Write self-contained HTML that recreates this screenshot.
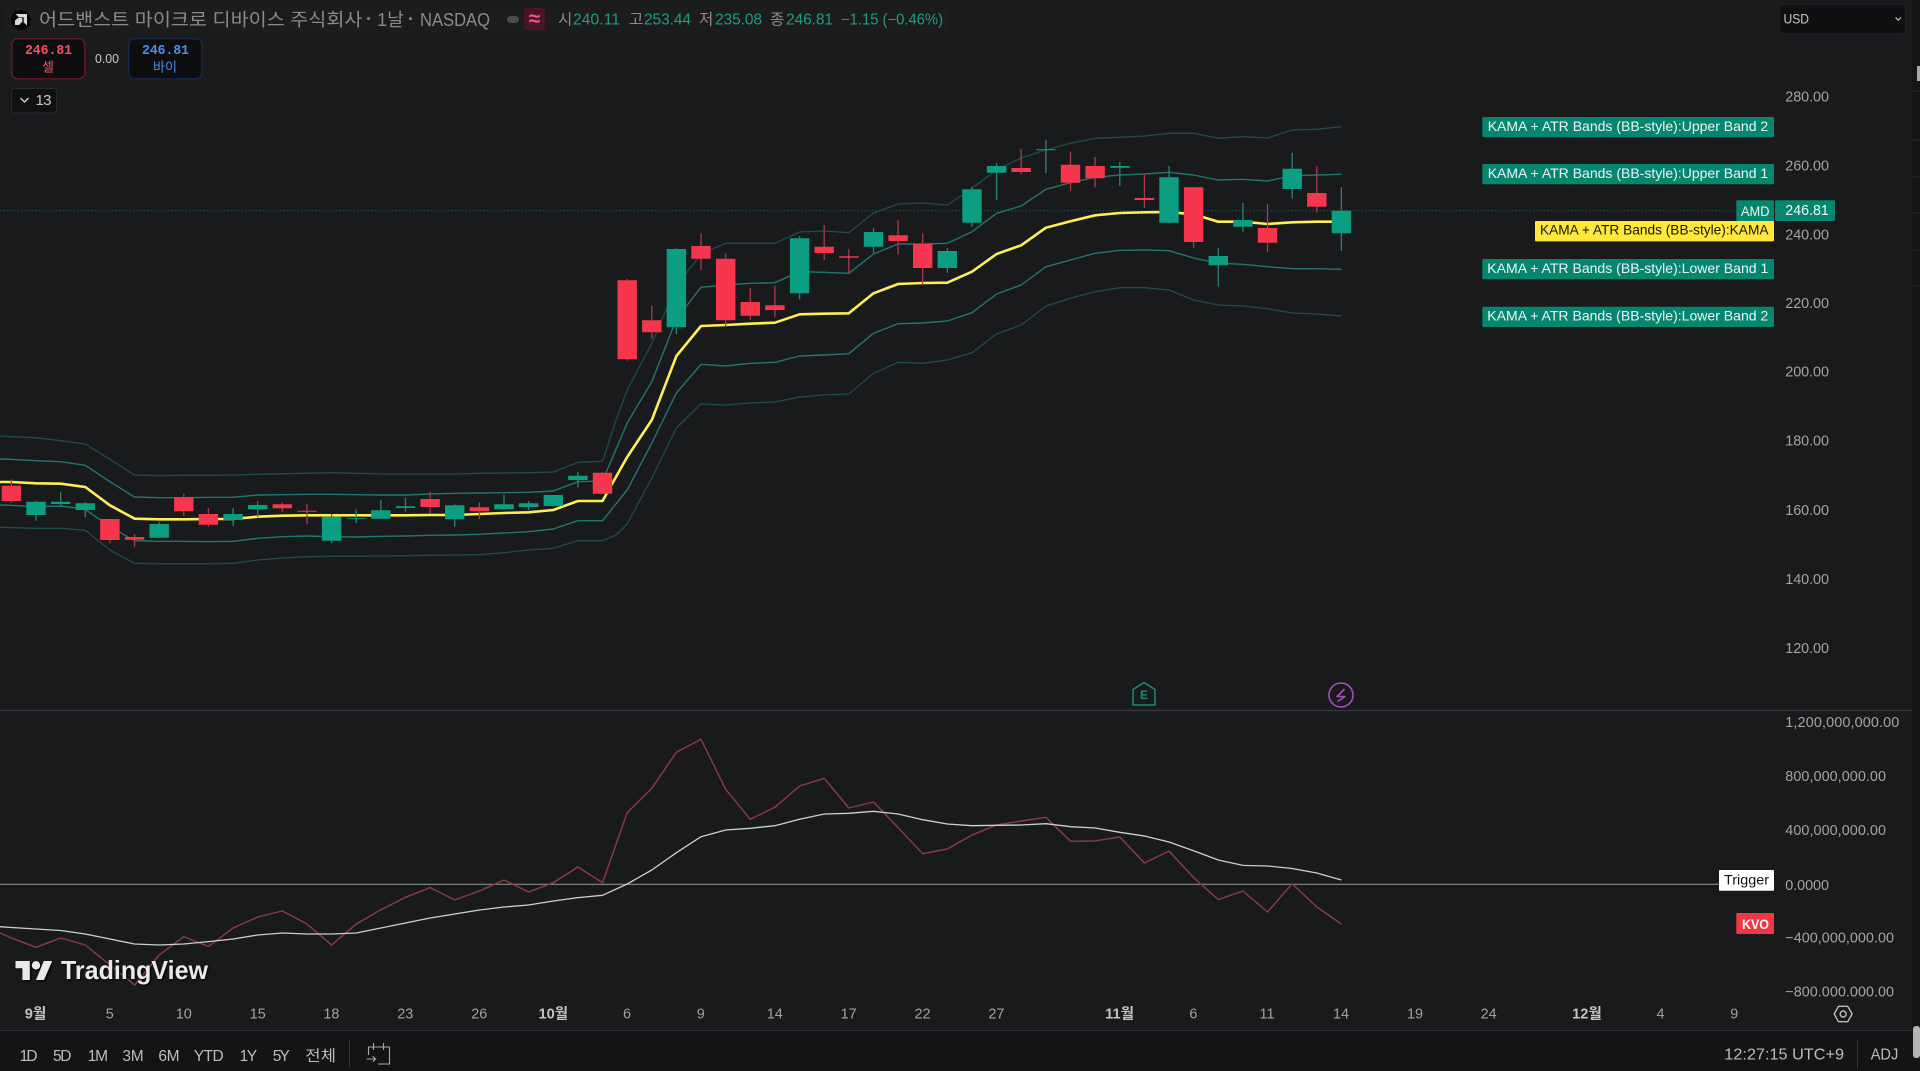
<!DOCTYPE html>
<html lang="ko"><head><meta charset="utf-8"><title>AMD</title>
<style>
html,body{margin:0;padding:0;background:#191a1c;width:1920px;height:1071px;overflow:hidden}
svg{display:block;position:absolute;left:0;top:0}
text{font-family:"Liberation Sans","Noto Sans CJK KR",sans-serif;dominant-baseline:central}
.ax{fill:#a3a3a3;font-size:14.4px;transform:translateY(1px)}
.t{fill:#a3a3a3;font-size:14.4px;text-anchor:middle;transform:translateY(.7px)}
.m{fill:#c4c4c4;font-size:14.6px;font-weight:bold;text-anchor:middle;transform:translateY(.7px)}
.b{fill:#bdbdbd;font-size:15.5px;transform:translateY(1px)}
.lb{fill:#ecf5f3;font-size:14px;transform:translateY(-.5px)}
.n{fill:#1d9d84;font-size:15.5px}
.k{fill:#8b8b88;font-size:15.5px}
</style></head><body>
<svg width="1920" height="1071" viewBox="0 0 1920 1071">
<rect width="1920" height="1071" fill="#191a1c"/>
<!-- legend backgrounds -->
<rect x="4" y="6" width="945" height="28" fill="#1d1c1d"/>
<rect x="6" y="36" width="200" height="47" fill="#1c1b1c"/>
<!-- right strip -->
<rect x="1912" y="0" width="8" height="1071" fill="#141517"/>
<path d="M1912 91h8M1912 140h8M1912 177h8M1912 213h8M1912 250h8M1912 286h8" stroke="#26282b" stroke-width="1"/>
<rect x="1917" y="66" width="3" height="15" fill="#a8a8a8"/>
<!-- price dotted line -->
<line x1="0" y1="210.7" x2="1736" y2="210.7" stroke="#1f5a52" stroke-width="1" stroke-dasharray="1.5 2"/>
<!-- separators -->
<line x1="0" y1="710.5" x2="1912" y2="710.5" stroke="#36383b" stroke-width="1.2"/>
<line x1="0" y1="884.3" x2="1719" y2="884.3" stroke="#8a8a8a" stroke-width="1.1"/>
<!-- bands -->
<g fill="none" stroke-linejoin="round">
<polyline stroke="#1f4d49" stroke-width="1.3" points="0,436 11.4,436.7 36,437.7 60.7,440.7 85.3,444 109.9,459.3 134.6,475 159.2,475.7 183.8,475.3 208.4,475.3 233.1,475 257.7,474.3 282.3,473.7 307,473.3 331.6,472.7 356.2,473.3 380.9,474 405.5,474 430.1,474 454.7,474 479.4,473.3 504,473 528.6,472.7 553.3,472 577.9,462.3 602.5,461.3 616,420 627.2,390 651.8,343.3 676.4,286 701,254 725.7,243.3 750.3,243.3 774.9,243.3 799.6,232 824.2,231 848.8,232.7 873.5,213 898.1,204 922.7,203 947.3,205 972,188.3 996.6,170 1021.2,158 1045.9,150 1070.5,143.3 1095.1,138.3 1119.8,137.3 1144.4,136 1169,133.3 1193.6,133.3 1218.3,138.3 1242.9,136.7 1267.5,138 1292.2,130 1316.8,129.3 1341.4,126.7"/>
<polyline stroke="#1f4d49" stroke-width="1.3" points="0,527.3 11.4,527.7 36,528.3 60.7,528.3 85.3,530.3 109.9,550 134.6,563.3 159.2,563.7 183.8,563.7 208.4,563.7 233.1,563.3 257.7,560 282.3,558 307,556.7 331.6,556.3 356.2,556.3 380.9,556 405.5,555.7 430.1,555.3 454.7,555 479.4,554.7 504,552.7 528.6,550 553.3,548.3 577.9,540.7 602.5,540.7 616,535 627.2,524 651.8,478 676.4,428 701,404 725.7,405 750.3,403 774.9,402 799.6,397 824.2,395 848.8,394 873.5,373.3 898.1,362.3 922.7,363.3 947.3,360 972,352.7 996.6,334 1021.2,325 1045.9,306 1070.5,298.3 1095.1,291.7 1119.8,287.7 1144.4,287.7 1169,290 1193.6,300 1218.3,305 1242.9,306 1267.5,308.7 1292.2,313 1316.8,314 1341.4,316"/>
<polyline stroke="#22756f" stroke-width="1.4" points="0,459 11.4,459.3 36,460.7 60.7,461.7 85.3,465.3 109.9,481.7 134.6,497 159.2,497.7 183.8,497.7 208.4,497.3 233.1,497.3 257.7,495 282.3,494.7 307,494.3 331.6,494.3 356.2,494.7 380.9,495 405.5,495 430.1,494 454.7,493.3 479.4,493 504,492.7 528.6,492.3 553.3,491 577.9,481.7 602.5,481 627.2,423 651.8,381.7 676.4,319 701,287.3 725.7,285 750.3,283.3 774.9,282.7 799.6,271.7 824.2,272.3 848.8,273.3 873.5,254 898.1,244 922.7,244 947.3,243.3 972,231.7 996.6,213.3 1021.2,206 1045.9,189.3 1070.5,182.7 1095.1,177.3 1119.8,175 1144.4,174 1169,172.3 1193.6,175 1218.3,180 1242.9,179.3 1267.5,181 1292.2,175.7 1316.8,175 1341.4,174.3"/>
<polyline stroke="#22756f" stroke-width="1.4" points="0,505 11.4,505.3 36,506.7 60.7,506 85.3,509.3 109.9,526.7 134.6,540.7 159.2,541.3 183.8,541.3 208.4,541.7 233.1,541.3 257.7,538.3 282.3,536.7 307,536 331.6,536.7 356.2,537 380.9,536.3 405.5,536 430.1,535.3 454.7,535 479.4,534.3 504,533 528.6,531.7 553.3,529 577.9,520.7 602.5,520.7 627.2,490 651.8,443 676.4,393 701,364.3 725.7,366 750.3,363.3 774.9,362.3 799.6,356 824.2,355 848.8,353.7 873.5,333.3 898.1,323.7 922.7,323 947.3,321 972,312.7 996.6,294 1021.2,285 1045.9,266.7 1070.5,260 1095.1,253.3 1119.8,250.3 1144.4,250 1169,250.7 1193.6,258 1218.3,263.3 1242.9,264.3 1267.5,266.7 1292.2,268.7 1316.8,268.7 1341.4,269.3"/>
<polyline stroke="#ffee58" stroke-width="2.6" points="0,482 11.4,482 36,483.3 60.7,483.7 85.3,487 109.9,505.3 134.6,518.7 159.2,519.3 183.8,519.3 208.4,519 233.1,519 257.7,516.7 282.3,515.7 307,515.3 331.6,515.3 356.2,515.3 380.9,515.3 405.5,515.3 430.1,515 454.7,515 479.4,514 504,513 528.6,512.3 553.3,510 577.9,501 602.5,501 627.2,457 651.8,420 676.4,356 701,326 725.7,325 750.3,323.7 774.9,322.7 799.6,314.3 824.2,313.7 848.8,313.3 873.5,293.3 898.1,284 922.7,283 947.3,282.7 972,271.7 996.6,254 1021.2,245.3 1045.9,227.7 1070.5,221.3 1095.1,215.3 1119.8,213 1144.4,212.3 1169,212 1193.6,214.3 1218.3,221.7 1242.9,221.7 1267.5,224 1292.2,222.3 1316.8,221.7 1341.4,221.7"/>
</g>
<!-- wicks -->
<path stroke="#a83c4a" stroke-width="1.3" fill="none" d="M11.4 479.3V502.7M109.9 518.7V543.3M134.6 534V546.7M183.8 494V516M208.4 508.3V526.7M282.3 502.3V512M307 504V524M430.1 491.3V514M479.4 502.3V519.3M602.5 472.3V494M627.2 279V360.7M651.8 306V338.7M701 233.3V270M725.7 253.3V326M750.3 288.3V320M774.9 285.7V317.3M824.2 225V260M848.8 249.3V274M898.1 220V254M922.7 233.3V285M1021.2 148.7V174.3M1070.5 152V190.7M1095.1 157V187.3M1144.4 174V208M1193.6 186.7V248.3M1267.5 204V252M1316.8 166V212.7"/>
<path stroke="#2a8476" stroke-width="1.3" fill="none" d="M36 500.7V520.7M60.7 492.3V506.7M85.3 501.7V517.3M159.2 521.7V538M233.1 508V526M257.7 501V517.3M331.6 514V543.3M356.2 509.3V523.3M380.9 500V519M405.5 497.7V511.7M454.7 504.3V526.7M504 494.7V510M528.6 501.3V510M553.3 495V506.7M577.9 471.7V487.7M676.4 248.3V334M799.6 236V299.3M873.5 228V253.3M947.3 248.3V272.7M972 186.7V226.7M996.6 163.3V200M1045.9 140V173.3M1119.8 161.7V186M1169 166V223.3M1218.3 248V286.7M1242.9 202.7V231.7M1292.2 152.7V198.7M1341.4 187.3V250.7"/>
<!-- bodies -->
<path fill="#f5364d" d="M1.7 485.7H21.1V501H1.7zM100.2 519H119.6V540H100.2zM124.9 537H144.3V539.7H124.9zM174.1 497H193.5V511.3H174.1zM198.7 514H218.1V524.7H198.7zM272.6 504.3H292V508.3H272.6zM297.3 510.7H316.7V511.7H297.3zM420.4 499H439.8V507H420.4zM469.7 507.3H489.1V511.3H469.7zM592.8 472.7H612.2V493.7H592.8zM617.5 280.3H636.9V359.3H617.5zM642.1 320.3H661.5V332.3H642.1zM691.3 246H710.7V258.7H691.3zM716 258.7H735.4V320.3H716zM740.6 302H760V315.7H740.6zM765.2 305.3H784.6V310H765.2zM814.5 246.7H833.9V253H814.5zM839.1 256.3H858.5V257.7H839.1zM888.4 235.3H907.8V241H888.4zM913 244H932.4V268H913zM1011.5 168H1030.9V172H1011.5zM1060.8 164.7H1080.2V182.7H1060.8zM1085.4 166H1104.8V178.3H1085.4zM1134.7 198H1154.1V200H1134.7zM1183.9 187.3H1203.3V242H1183.9zM1257.8 228H1277.2V242.7H1257.8zM1307.1 193H1326.5V206.7H1307.1z"/>
<path fill="#0b9e83" d="M26.3 501.7H45.7V515H26.3zM51 501.7H70.4V504H51zM75.6 503.3H95V510H75.6zM149.5 524H168.9V537.7H149.5zM223.4 514H242.8V520H223.4zM248 505H267.4V509.3H248zM321.9 516.7H341.3V540.7H321.9zM346.5 518H365.9V518.7H346.5zM371.2 510.3H390.6V518.7H371.2zM395.8 506.3H415.2V508H395.8zM445 505.3H464.4V519.3H445zM494.3 504.3H513.7V509.3H494.3zM518.9 503.3H538.3V507H518.9zM543.6 495H563V506H543.6zM568.2 475.7H587.6V480H568.2zM666.7 249H686.1V327.3H666.7zM789.9 238.3H809.3V293.3H789.9zM863.8 232H883.2V246.7H863.8zM937.6 251H957V268H937.6zM962.3 189.3H981.7V222.7H962.3zM986.9 166H1006.3V172.7H986.9zM1036.2 149.3H1055.6V150.3H1036.2zM1110.1 166H1129.5V167.7H1110.1zM1159.3 177.3H1178.7V222.7H1159.3zM1208.6 256H1228V265.3H1208.6zM1233.2 220H1252.6V226.7H1233.2zM1282.5 168.7H1301.9V189H1282.5zM1331.7 210.7H1351.1V233.3H1331.7z"/>
<!-- KVO / trigger -->
<g fill="none" stroke-linejoin="round">
<polyline stroke="#8f3a44" stroke-width="1.4" points="0,933 11.4,938 36,947.3 60.7,938 85.3,945 109.9,965 134.6,985 159.2,955 183.8,936.6 208.4,946.5 233.1,928 257.7,917 282.3,911 307,924 331.6,945 356.2,924 380.9,909.7 405.5,897.3 430.1,887.6 454.7,900 479.4,891 504,880 528.6,892 553.3,882.6 577.9,867 602.5,882.7 627.2,812.7 651.8,788.3 676.4,752.3 701,739.3 725.7,789.3 750.3,819.3 774.9,807.3 799.6,786 824.2,778.3 848.8,808 873.5,802 898.1,827.7 922.7,853.7 947.3,849 972,835 996.6,825 1021.2,821 1045.9,817.3 1070.5,841.3 1095.1,840.9 1119.8,837 1144.4,863 1169,851 1193.6,877.6 1218.3,899.6 1242.9,891 1267.5,912 1292.2,883.7 1316.8,907 1341.4,924"/>
<polyline stroke="#cfcfcf" stroke-width="1.3" points="0,926.7 11.4,927.5 36,929 60.7,930.5 85.3,934 109.9,939 134.6,944 159.2,945 183.8,944 208.4,941.6 233.1,939 257.7,935 282.3,933 307,934 331.6,934 356.2,933 380.9,928 405.5,923 430.1,918 454.7,914 479.4,910 504,907 528.6,905 553.3,901 577.9,897.6 602.5,895.3 627.2,884 651.8,870 676.4,852.7 701,836.7 725.7,830 750.3,828.3 774.9,825.7 799.6,819.3 824.2,814 848.8,813.3 873.5,811.3 898.1,814 922.7,819.7 947.3,824 972,825.7 996.6,825.3 1021.2,825 1045.9,823.7 1070.5,826.7 1095.1,828 1119.8,832.3 1144.4,836 1169,842 1193.6,850.7 1218.3,860 1242.9,865.4 1267.5,866 1292.2,868.5 1316.8,873 1341.4,880"/>
</g>
<!-- legend -->
<circle cx="21" cy="20" r="10" fill="#060606"/>
<path fill="#d8d8d8" d="M15.5 14H27V25.5L23.7 22.2V17.3H18.8zM15 20.5L18.3 17.7H22.3V21.7L19 25H15z"/>
<text x="39" y="20" font-size="18" fill="#8a8a87" textLength="323.5" lengthAdjust="spacingAndGlyphs">어드밴스트 마이크로 디바이스 주식회사</text>
<text x="366" y="19" font-size="18" font-weight="bold" fill="#8a8a87">·</text>
<text x="377" y="20" font-size="18" fill="#8a8a87" textLength="27" lengthAdjust="spacingAndGlyphs">1날</text>
<text x="408" y="19" font-size="18" font-weight="bold" fill="#8a8a87">·</text>
<text x="420" y="20" font-size="18" fill="#8a8a87" textLength="70" lengthAdjust="spacingAndGlyphs">NASDAQ</text>
<rect x="507" y="16" width="12" height="7" rx="3.5" fill="#4c4c47"/>
<rect x="524" y="8" width="21" height="22" rx="3" fill="#4b1526"/>
<text x="534.5" y="19" font-size="21" font-weight="bold" fill="#f0588a" text-anchor="middle">≈</text>
<text class="k" x="558" y="20" textLength="14">시</text><text class="n" x="573" y="20" textLength="47">240.11</text>
<text class="k" x="629" y="20" textLength="14">고</text><text class="n" x="644" y="20" textLength="47">253.44</text>
<text class="k" x="699" y="20" textLength="15">저</text><text class="n" x="715" y="20" textLength="47">235.08</text>
<text class="k" x="770" y="20" textLength="15">종</text><text class="n" x="786" y="20" textLength="47">246.81</text>
<text class="n" x="841" y="20" textLength="102" lengthAdjust="spacingAndGlyphs">−1.15 (−0.46%)</text>
<!-- buy/sell -->
<rect x="11.8" y="38.8" width="73" height="40" rx="6" fill="#0e0e10" stroke="#6e1c2a" stroke-width="1.2"/>
<rect x="128.8" y="38.8" width="73" height="40" rx="6" fill="#0e0e10" stroke="#16295a" stroke-width="1.2"/>
<text x="25" y="51" font-size="14" font-weight="bold" fill="#f7525f" style="font-family:'Liberation Mono',monospace" textLength="47" lengthAdjust="spacingAndGlyphs">246.81</text>
<text x="48" y="67" font-size="13" fill="#f7525f" text-anchor="middle">셀</text>
<text x="142" y="51" font-size="14" font-weight="bold" fill="#4a90e8" style="font-family:'Liberation Mono',monospace" textLength="47" lengthAdjust="spacingAndGlyphs">246.81</text>
<text x="165" y="67" font-size="13" fill="#4a90e8" text-anchor="middle">바이</text>
<text x="95" y="58.5" font-size="13" fill="#c8c8c8" textLength="24" lengthAdjust="spacingAndGlyphs">0.00</text>
<rect x="11.5" y="88.5" width="45" height="24.5" rx="3" fill="#101113" stroke="#28292c"/>
<path d="M20.5 98l4 4 4-4" fill="none" stroke="#cfcfcf" stroke-width="1.4"/>
<text x="35.5" y="100.5" font-size="15" fill="#c8c8c8" textLength="16">13</text>
<!-- USD -->
<rect x="1779.5" y="4.5" width="126" height="29.5" rx="4" fill="#0f1012" stroke="#1f2023"/>
<text x="1783.5" y="19" font-size="13.5" fill="#c4c4c4" textLength="25.5" lengthAdjust="spacingAndGlyphs">USD</text>
<path d="M1895.5 17.5l2.7 2.7 2.7-2.7" fill="none" stroke="#c4c4c4" stroke-width="1.2"/>
<!-- price axis -->
<text class="ax" x="1785.3" y="96.7" textLength="43.7">280.00</text>
<text class="ax" x="1785.3" y="165.3" textLength="43.7">260.00</text>
<text class="ax" x="1785.3" y="234.3" textLength="43.7">240.00</text>
<text class="ax" x="1785.3" y="303" textLength="43.7">220.00</text>
<text class="ax" x="1785.3" y="371.5" textLength="43.7">200.00</text>
<text class="ax" x="1785.3" y="440.7" textLength="43.7">180.00</text>
<text class="ax" x="1785.3" y="509.8" textLength="43.7">160.00</text>
<text class="ax" x="1785.3" y="578.8" textLength="43.7">140.00</text>
<text class="ax" x="1785.3" y="647.8" textLength="43.7">120.00</text>
<!-- labels -->
<g>
<rect x="1482.3" y="117" width="291.7" height="20.3" rx="1" fill="#07866f"/>
<rect x="1482.3" y="164" width="291.7" height="20.3" rx="1" fill="#07866f"/>
<rect x="1482.3" y="259" width="291.7" height="20.3" rx="1" fill="#07866f"/>
<rect x="1482.3" y="306.7" width="291.7" height="20.3" rx="1" fill="#07866f"/>
<text class="lb" x="1487.7" y="126.5" textLength="280.5" lengthAdjust="spacingAndGlyphs">KAMA + ATR Bands (BB-style):Upper Band 2</text>
<text class="lb" x="1487.7" y="173.5" textLength="280.5" lengthAdjust="spacingAndGlyphs">KAMA + ATR Bands (BB-style):Upper Band 1</text>
<text class="lb" x="1487.3" y="268.5" textLength="281" lengthAdjust="spacingAndGlyphs">KAMA + ATR Bands (BB-style):Lower Band 1</text>
<text class="lb" x="1487.3" y="316" textLength="281" lengthAdjust="spacingAndGlyphs">KAMA + ATR Bands (BB-style):Lower Band 2</text>
<rect x="1736.3" y="200.3" width="37.7" height="20.7" rx="1" fill="#07866f"/>
<rect x="1775" y="200.3" width="60" height="20.7" rx="1.5" fill="#07866f"/>
<text class="lb" x="1741" y="211.5" textLength="28.5" lengthAdjust="spacingAndGlyphs">AMD</text>
<text x="1785.3" y="211" font-size="14.4" fill="#f2f7f6" textLength="43.5" lengthAdjust="spacingAndGlyphs">246.81</text>
<rect x="1535" y="221" width="239" height="20.4" rx="1" fill="#ffe83b"/>
<text x="1540" y="229.7" font-size="14" fill="#161616" textLength="228.5" lengthAdjust="spacingAndGlyphs">KAMA + ATR Bands (BB-style):KAMA</text>
</g>
<!-- event icons -->
<path d="M1133 689.5L1144 682.5L1155 689.5V705H1133Z" fill="#191a1c" stroke="#1a8c75" stroke-width="1.5" stroke-linejoin="round"/>
<text x="1144" y="695" font-size="12" font-weight="bold" fill="#1a8c75" text-anchor="middle">E</text>
<circle cx="1341" cy="695" r="12" fill="#191a1c" stroke="#a64bc4" stroke-width="1.6"/>
<path d="M1344.5 689L1337 696.5H1345L1337.5 701.5" fill="none" stroke="#a64bc4" stroke-width="1.6" stroke-linejoin="round"/>
<!-- oscillator axis -->
<text class="ax" x="1785.3" y="722" textLength="114">1,200,000,000.00</text>
<text class="ax" x="1785.3" y="776" textLength="100.7">800,000,000.00</text>
<text class="ax" x="1785.3" y="830" textLength="100.7">400,000,000.00</text>
<text class="ax" x="1785.3" y="885" textLength="43.7">0.0000</text>
<text class="ax" x="1785.3" y="937.7" textLength="108.7">−400,000,000.00</text>
<text class="ax" x="1785.3" y="991.7" textLength="108.7">−800.000.000.00</text>
<rect x="1719" y="870" width="55" height="20.7" rx="1" fill="#fff"/>
<text x="1724" y="879.7" font-size="14" fill="#111" textLength="45" lengthAdjust="spacingAndGlyphs">Trigger</text>
<rect x="1736.3" y="913" width="37.7" height="21" rx="1" fill="#f23645"/>
<text x="1742" y="924" font-size="14" fill="#fff" font-weight="bold" textLength="27" lengthAdjust="spacingAndGlyphs">KVO</text>
<!-- TradingView logo -->
<g fill="#eaeaea" style="filter:drop-shadow(1px 1.5px 1px #000)">
<path d="M29.8 980H22.4V968.3H15.5V961H29.8ZM44 980H36L43.8 961H52.2Z"/>
<circle cx="36" cy="965.3" r="4.2"/>
<text x="61" y="970" font-size="26" font-weight="bold" fill="#eaeaea" textLength="147" lengthAdjust="spacingAndGlyphs">TradingView</text>
</g>
<!-- time axis -->
<text class="m" x="35.5" y="1014">9월</text>
<text class="t" x="109.7" y="1014">5</text>
<text class="t" x="183.8" y="1014">10</text>
<text class="t" x="257.7" y="1014">15</text>
<text class="t" x="331.4" y="1014">18</text>
<text class="t" x="405.2" y="1014">23</text>
<text class="t" x="479.2" y="1014">26</text>
<text class="m" x="553.3" y="1014">10월</text>
<text class="t" x="627" y="1014">6</text>
<text class="t" x="700.8" y="1014">9</text>
<text class="t" x="774.7" y="1014">14</text>
<text class="t" x="848.6" y="1014">17</text>
<text class="t" x="922.5" y="1014">22</text>
<text class="t" x="996.4" y="1014">27</text>
<text class="m" x="1119.6" y="1014">11월</text>
<text class="t" x="1193.4" y="1014">6</text>
<text class="t" x="1267" y="1014">11</text>
<text class="t" x="1341" y="1014">14</text>
<text class="t" x="1415" y="1014">19</text>
<text class="t" x="1488.6" y="1014">24</text>
<text class="m" x="1587" y="1014">12월</text>
<text class="t" x="1660.5" y="1014">4</text>
<text class="t" x="1734.3" y="1014">9</text>
<path d="M1834.2 1014L1838.5 1006.3H1847.7L1852.1 1014L1847.7 1021.7H1838.5Z" fill="none" stroke="#bdbdbd" stroke-width="1.4" stroke-linejoin="round"/>
<circle cx="1843.2" cy="1014" r="3" fill="none" stroke="#bdbdbd" stroke-width="1.4"/>
<!-- bottom bar -->
<rect x="0" y="1030" width="1920" height="41" fill="#131416"/>
<line x1="0" y1="1030.5" x2="1912" y2="1030.5" stroke="#2b2d30" stroke-width="1"/>
<rect x="1913" y="1026" width="7" height="32" rx="3" fill="#b5b5b5"/>
<text class="b" x="19.6" y="1055.5" textLength="18">1D</text>
<text class="b" x="53" y="1055.5" textLength="18.4">5D</text>
<text class="b" x="87.8" y="1055.5" textLength="20.2">1M</text>
<text class="b" x="122.4" y="1055.5" textLength="21.3">3M</text>
<text class="b" x="158.4" y="1055.5" textLength="21.2">6M</text>
<text class="b" x="193.9" y="1055.5" textLength="29.8">YTD</text>
<text class="b" x="239.6" y="1055.5" textLength="17.5">1Y</text>
<text class="b" x="272.7" y="1055.5" textLength="17.1">5Y</text>
<text class="b" x="305.3" y="1055.5" textLength="30.7" lengthAdjust="spacingAndGlyphs">전체</text>
<line x1="349.5" y1="1041" x2="349.5" y2="1067.5" stroke="#35373a"/>
<path d="M368.5 1055V1047H389.5V1064H378M373.5 1043V1050M383.5 1043V1050M366.5 1059H375.5M372.8 1056.2L375.5 1059L372.8 1061.8" fill="none" stroke="#a8a8a8" stroke-width="1.1"/>
<text x="1724.3" y="1055" font-size="16" fill="#bdbdbd" textLength="119.7" lengthAdjust="spacingAndGlyphs">12:27:15 UTC+9</text>
<line x1="1857.5" y1="1040.5" x2="1857.5" y2="1069" stroke="#35373a"/>
<text x="1870.7" y="1055" font-size="16" fill="#bdbdbd" textLength="27.6" lengthAdjust="spacingAndGlyphs">ADJ</text>
</svg>
</body></html>
